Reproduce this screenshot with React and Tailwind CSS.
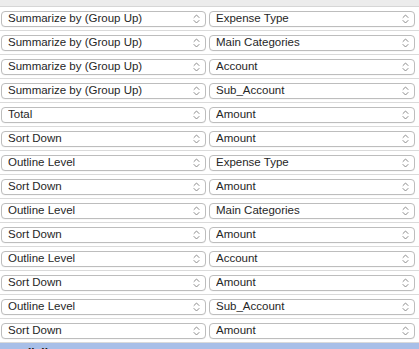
const ROWS = [
  ['Summarize by (Group Up)', 'Expense Type'],
  ['Summarize by (Group Up)', 'Main Categories'],
  ['Summarize by (Group Up)', 'Account'],
  ['Summarize by (Group Up)', 'Sub_Account'],
  ['Total', 'Amount'],
  ['Sort Down', 'Amount'],
  ['Outline Level', 'Expense Type'],
  ['Sort Down', 'Amount'],
  ['Outline Level', 'Main Categories'],
  ['Sort Down', 'Amount'],
  ['Outline Level', 'Account'],
  ['Sort Down', 'Amount'],
  ['Outline Level', 'Sub_Account'],
  ['Sort Down', 'Amount'],
]

function Chevrons() {
  return (
    <svg width="7" height="10" viewBox="0 0 7 10" fill="none" stroke="#8a8a8a" strokeWidth="1" strokeLinecap="round" strokeLinejoin="round">
      <path d="M1 3.5 L3.5 1 L6 3.5" />
      <path d="M1 6.5 L3.5 9 L6 6.5" />
    </svg>
  )
}

function Popup({ label, width }) {
  return (
    <div
      className={`flex items-center h-[16px] ${width} rounded-[4px] border border-[#bdbdbd] bg-white pl-[6px] pr-[5px] shadow-[0_0.5px_0_rgba(0,0,0,0.06)]`}
    >
      <span className="flex-1 truncate text-[11.5px] leading-none text-[#262626]">{label}</span>
      <Chevrons />
    </div>
  )
}

export default function App() {
  return (
    <div className="w-[419px] h-[349px] overflow-hidden bg-white font-['Liberation_Sans',Arial,sans-serif]">
      {/* top strip */}
      <div className="h-[7px] bg-[#ececec] border-b border-[#d6d6d6]" />

      {ROWS.map(([a, b], i) => (
        <div key={i} className="flex items-center gap-[3px] h-[24px] pl-[1px] border-b border-[#dadada]">
          <Popup label={a} width="w-[205px]" />
          <Popup label={b} width="w-[206px]" />
        </div>
      ))}

      {/* selected row, mostly cut off */}
      <div className="h-[24px] bg-[#a8bfe8] flex items-start pt-[4px] pl-[28px] overflow-hidden">
        <span className="text-[12px] font-bold text-[#1a1a1a] leading-none">Ik Ik</span>
      </div>
    </div>
  )
}
